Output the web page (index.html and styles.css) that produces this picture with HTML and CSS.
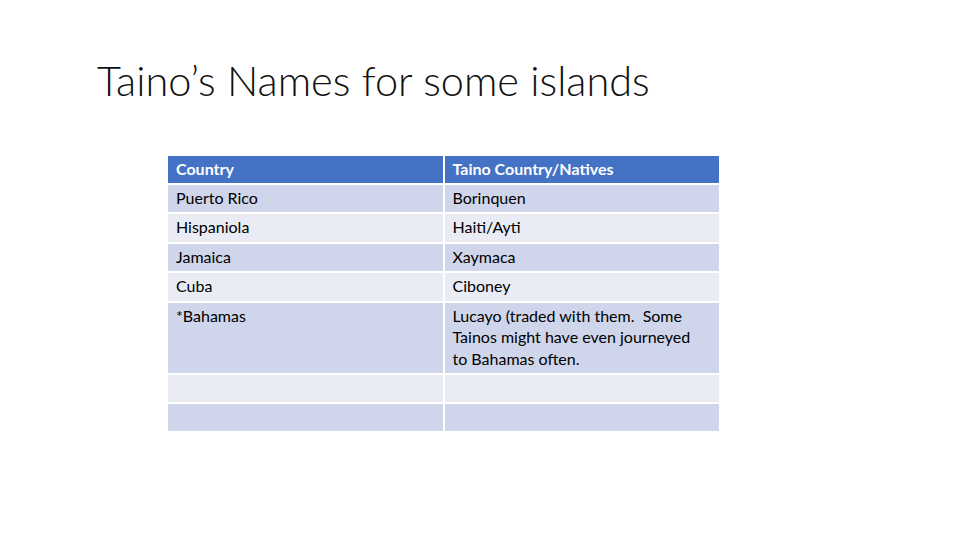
FILE: index.html
```html
<!DOCTYPE html>
<html>
<head>
<meta charset="utf-8">
<link rel="stylesheet" href="styles.css">
</head>
<body>
<div class="slide">
  <h1 class="title">Taino’s Names for some islands</h1>
  <table class="names">
    <thead>
      <tr><th>Country</th><th>Taino Country/Natives</th></tr>
    </thead>
    <tbody>
      <tr class="odd"><td>Puerto Rico</td><td>Borinquen</td></tr>
      <tr class="even"><td>Hispaniola</td><td>Haiti/Ayti</td></tr>
      <tr class="odd"><td>Jamaica</td><td>Xaymaca</td></tr>
      <tr class="even"><td>Cuba</td><td>Ciboney</td></tr>
      <tr class="odd tall"><td>*Bahamas</td><td>Lucayo (traded with them.&nbsp; Some Tainos might have even journeyed to Bahamas often.</td></tr>
      <tr class="even"><td></td><td></td></tr>
      <tr class="odd"><td></td><td></td></tr>
    </tbody>
  </table>
</div>
</body>
</html>
```
FILE: styles.css
```css
html, body {
  margin: 0;
  padding: 0;
  background: #ffffff;
}
.slide {
  width: 960px;
  height: 540px;
  overflow: hidden;
  font-family: Lato, "Open Sans", sans-serif;
  color: #000;
}
.title {
  margin: 0;
  padding: 53px 0 0 97px;
  font-size: 41.5px;
  font-weight: 300;
  line-height: 54px;
  color: #111;
}
.names {
  margin: 47px 0 0 166px;
  border-collapse: collapse;
  table-layout: fixed;
  width: 555px;
  font-size: 16px;
}
.names th, .names td {
  border: 2px solid #ffffff;
  padding: 2px 14px 4px 8px;
  text-align: left;
  vertical-align: top;
  line-height: 21.5px;
  height: 21px;
}
.names th {
  background: #4472c4;
  color: #ffffff;
  font-weight: bold;
  height: 20px;
  padding-top: 2px;
  padding-bottom: 3px;
}
.odd td { background: #cfd5ea; }
.even td { background: #e9ebf5; }
```
